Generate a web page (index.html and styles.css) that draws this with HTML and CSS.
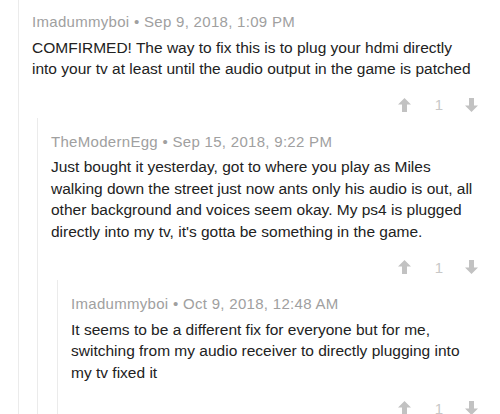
FILE: index.html
```html
<!DOCTYPE html>
<html>
<head>
<meta charset="utf-8">
<link rel="stylesheet" href="styles.css">
</head>
<body>
<div class="thread level1">
  <div class="comment">
    <div class="meta">Imadummyboi • Sep 9, 2018, 1:09 PM</div>
    <div class="body">COMFIRMED! The way to fix this is to plug your hdmi directly<br>into your tv at least until the audio output in the game is patched</div>
    <div class="votes">
      <svg class="arrow" width="13" height="14" viewBox="0 0 13 14"><path d="M6.5 0 L13 6.5 L9 6.5 L9 14 L4 14 L4 6.5 L0 6.5 Z"/></svg>
      <span class="count">1</span>
      <svg class="arrow" width="13" height="14" viewBox="0 0 13 14"><path d="M6.5 14 L13 7.5 L9 7.5 L9 0 L4 0 L4 7.5 L0 7.5 Z"/></svg>
    </div>
  </div>
  <div class="thread level2">
    <div class="comment">
      <div class="meta">TheModernEgg • Sep 15, 2018, 9:22 PM</div>
      <div class="body">Just bought it yesterday, got to where you play as Miles<br>walking down the street just now ants only his audio is out, all<br>other background and voices seem okay. My ps4 is plugged<br>directly into my tv, it's gotta be something in the game.</div>
      <div class="votes">
        <svg class="arrow" width="13" height="14" viewBox="0 0 13 14"><path d="M6.5 0 L13 6.5 L9 6.5 L9 14 L4 14 L4 6.5 L0 6.5 Z"/></svg>
        <span class="count">1</span>
        <svg class="arrow" width="13" height="14" viewBox="0 0 13 14"><path d="M6.5 14 L13 7.5 L9 7.5 L9 0 L4 0 L4 7.5 L0 7.5 Z"/></svg>
      </div>
    </div>
    <div class="thread level3">
      <div class="comment">
        <div class="meta">Imadummyboi • Oct 9, 2018, 12:48 AM</div>
        <div class="body">It seems to be a different fix for everyone but for me,<br>switching from my audio receiver to directly plugging into<br>my tv fixed it</div>
        <div class="votes">
          <svg class="arrow" width="13" height="14" viewBox="0 0 13 14"><path d="M6.5 0 L13 6.5 L9 6.5 L9 14 L4 14 L4 6.5 L0 6.5 Z"/></svg>
          <span class="count">1</span>
          <svg class="arrow" width="13" height="14" viewBox="0 0 13 14"><path d="M6.5 14 L13 7.5 L9 7.5 L9 0 L4 0 L4 7.5 L0 7.5 Z"/></svg>
        </div>
      </div>
    </div>
  </div>
</div>
</body>
</html>
```

FILE: styles.css
```css
html, body {
  margin: 0;
  padding: 0;
  background: #ffffff;
  height: 100%;
  overflow: hidden;
}
body {
  font-family: "Liberation Sans", Arial, sans-serif;
  color: #222222;
}
.thread {
  border-left: 1px solid #ebebeb;
  padding-left: 13px;
}
.level1 {
  margin-left: 18px;
  padding-right: 22px;
  min-height: 414px;
  box-sizing: border-box;
}
.level2 {
  margin-left: 5px;
  margin-top: 5px;
}
.level3 {
  margin-left: 6px;
  margin-top: 5px;
}
.comment {
  padding-top: 14px;
}
.level1 > .comment {
  padding-top: 12px;
}
.meta {
  font-size: 15px;
  letter-spacing: 0.3px;
  color: #a0a0a0;
  line-height: 20px;
  white-space: nowrap;
}
.body {
  margin-top: 4.5px;
  font-size: 15.5px;
  line-height: 21.5px;
  white-space: nowrap;
}
.votes {
  display: flex;
  justify-content: flex-end;
  align-items: center;
  margin-top: 17px;
  height: 16px;
}
.arrow {
  fill: #c2c2c2;
  display: block;
}
.count {
  font-size: 15px;
  color: #c8c8c8;
  margin: 0 22px 0 24px;
}
```
